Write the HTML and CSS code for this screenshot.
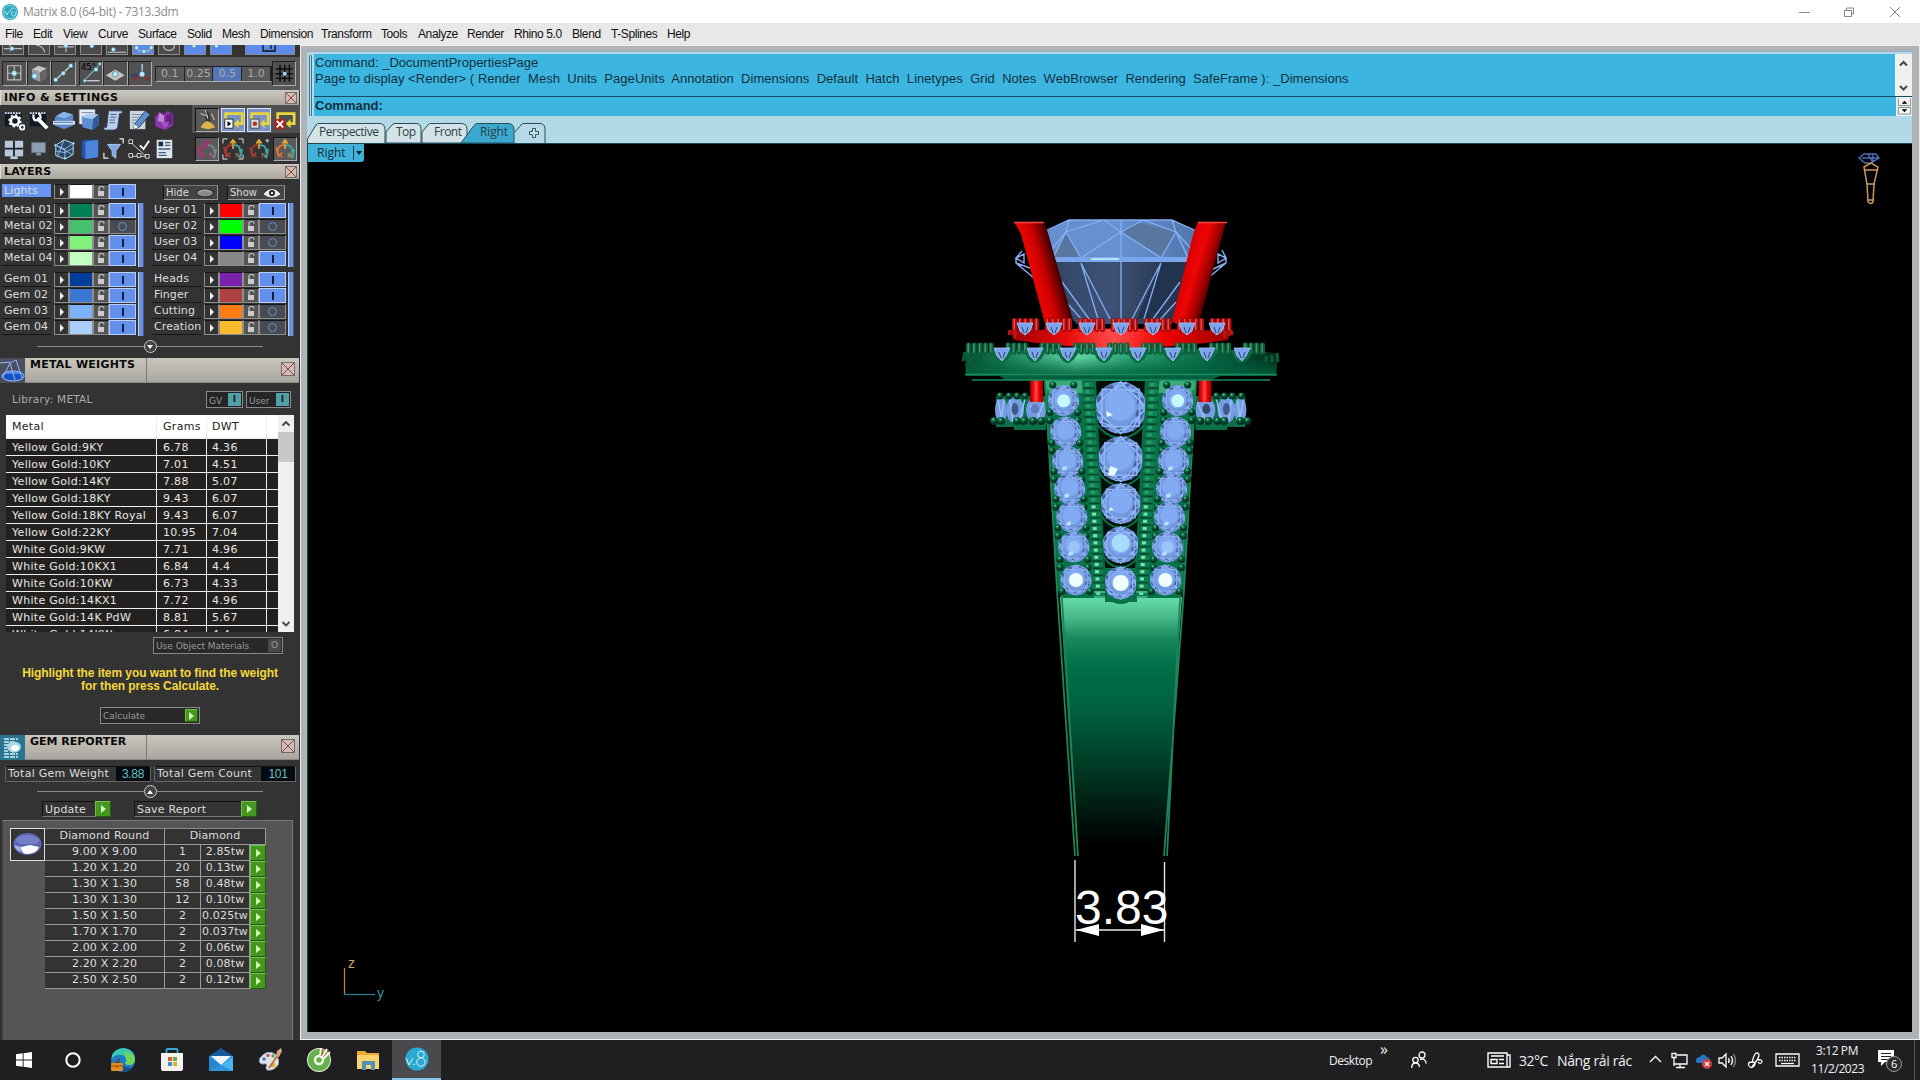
FILE: index.html
```html
<!DOCTYPE html>
<html lang="en">
<head>
  <meta charset="UTF-8">
  <title>Matrix 8.0 (64-bit) - 7313.3dm</title>
  <link rel="stylesheet" href="styles.css">
</head>
<body>
  <header class="titlebar">
    <svg class="app-icon" viewBox="0 0 18 18"><circle cx="9" cy="9" r="8" fill="#2ca5c0"/><circle cx="9" cy="9" r="6.5" fill="none" stroke="#7fd4e4" stroke-width="1"/><path d="M4 8l2 4 2-4M13 6a2 2 0 1 0-1 3 2 2 0 1 0 1 0" fill="none" stroke="#a9e6f0"/></svg>
    <span class="title">Matrix 8.0 (64-bit) - 7313.3dm</span>
    <svg class="win-buttons" viewBox="0 0 104 20" fill="none" stroke="#888"><path d="M1 10.5h11M46.500 8.500h7v6h-7zM48.500 8v-2h7v6h-2M92 5l10 10M102 5l-10 10"/></svg>
  </header>

  <nav class="menubar">
    <span>File</span><span>Edit</span><span>View</span><span>Curve</span><span>Surface</span><span>Solid</span><span>Mesh</span><span>Dimension</span><span>Transform</span><span>Tools</span><span>Analyze</span><span>Render</span><span>Rhino 5.0</span><span>Blend</span><span>T-Splines</span><span>Help</span>
  </nav>

  <div class="workspace">
    <aside class="sidebar">
      <div class="snap-row" id="snaps"></div>
      <div class="tool-row">
        <div class="tool-group" id="toolsA"></div>
        <div class="tool-group" id="toolsB"></div>
        <div class="grid-steps"><span>0.1</span><span>0.25</span><span class="on">0.5</span><span>1.0</span></div>
        <div class="tool"><svg viewBox="0 0 24 24"><path d="M3 7.500h18M3 12.500h18M3 17.500h18M7.500 3v18M12.500 3v18M17.500 3v18" stroke="#080808" stroke-width="1.500"/><circle cx="12.500" cy="12.500" r="2.200" fill="#9cd8ee"/></svg></div>
      </div>

      <div class="section-head info"><b>INFO &amp; SETTINGS</b><i class="close"></i></div>
      <div class="icon-block">
        <div class="icon-grid" id="infoIcons"></div>
        <div class="icon-grid history" id="historyIcons"></div>
      </div>

      <div class="section-head"><b>LAYERS</b><i class="close"></i></div>
      <div class="layers">
        <div class="lights-row">
          <div id="lights"></div>
          <span class="mini hide">Hide <svg viewBox="0 0 18 10"><ellipse cx="9" cy="5" rx="8.500" ry="4" fill="#888" stroke="#222"/><path d="M3 4q6-4 12 0" stroke="#bbb" fill="none"/></svg></span>
          <span class="mini show">Show <svg viewBox="0 0 18 10"><path d="M1 6q8-9 16 0q-8 6-16 0z" fill="#eee" stroke="#eee"/><circle cx="9" cy="5" r="3" fill="#222"/><circle cx="9" cy="5" r="1.200" fill="#eee"/></svg></span>
        </div>
        <div class="layer-grid" id="layerGrid"></div>
        <div class="divider"><i class="down"></i></div>
      </div>

      <div class="panel-head">
        <svg viewBox="0 0 25 25"><rect width="25" height="25" fill="#4b5060"/><ellipse cx="13" cy="18" rx="11" ry="5" fill="#1650c4" stroke="#9fc4ff"/><path d="M3 19L10 5l6-3 6 18M10 5l5 17M0 5l10-1M5 15l15 0" fill="none" stroke="#8db9ff"/></svg>
        <b>METAL WEIGHTS</b><i class="close"></i>
      </div>
      <section class="metal-panel">
        <div class="library">
          <span class="lib-name">Library: METAL</span>
          <span class="switch">GV<i>I</i></span>
          <span class="switch user">User<i>I</i></span>
        </div>
        <div class="metal-table">
          <div class="metal-rows">
            <div class="metal-row head"><span>Metal</span><span>Grams</span><span>DWT</span><span></span></div>
            <div id="metals"></div>
          </div>
          <div class="scrollbar">
            <svg viewBox="0 0 16 17"><path d="M4.500 10.500L8 7l3.500 3.500" fill="none" stroke="#444" stroke-width="1.800"/></svg>
            <i></i>
            <svg class="bottom" viewBox="0 0 16 17"><path d="M4.500 7L8 10.500 11.500 7" fill="none" stroke="#444" stroke-width="1.800"/></svg>
          </div>
        </div>
        <div class="field-button materials">Use Object Materials<i>O</i></div>
        <p class="hint">Highlight the item you want to find the weight<br>for then press Calculate.</p>
        <div class="field-button calc">Calculate<i class="go"></i></div>
      </section>

      <div class="panel-head gem">
        <svg viewBox="0 0 25 25"><rect width="25" height="25" fill="#2a7490"/><path d="M4 4h14M4 7h10M4 10h4M4 13h3M4 16h4M4 19h14M4 22h14" stroke="#d5f0f5" stroke-width="1.300" stroke-dasharray="5 1"/><ellipse cx="14" cy="12" rx="7" ry="5.500" fill="#a9d8e8"/><ellipse cx="15" cy="13" rx="4" ry="3" fill="#fff"/></svg>
        <b>GEM REPORTER</b><i class="close"></i>
      </div>
      <section class="gem-panel">
        <div class="totals">
          <span class="total weight">Total Gem Weight<b>3.88</b></span>
          <span class="total">Total Gem Count<b>101</b></span>
        </div>
        <div class="divider"><i class="up"></i></div>
        <div class="actions"><span class="update">Update</span><i class="go"></i><span class="save">Save Report</span><i class="go"></i></div>
        <div class="gem-list">
          <div class="thumb"><svg viewBox="0 0 33 30"><ellipse cx="16.500" cy="15" rx="14" ry="11" fill="#5c66b4"/><path d="M4 11q12-10 25 0l-4 4H9z" fill="#7380c6"/><path d="M10 18l9-2 9 2q-2 7-13 7-5-1-5-7z" fill="#fff"/><path d="M3 16l7 2 0 5q-6-2-7-7z" fill="#a6b3df"/></svg></div>
          <div class="gem-table">
            <div class="gem-row head"><span>Diamond Round</span><span>Diamond</span></div>
            <div id="gems"></div>
          </div>
        </div>
      </section>
    </aside>

    <main class="main">
      <div class="command">
        <div class="grip"></div>
        <div class="command-body">
          <div class="log">
            <pre>Command: _DocumentPropertiesPage
<span class="options">Page to display &lt;Render&gt; ( Render  Mesh  Units  PageUnits  Annotation  Dimensions  Default  Hatch  Linetypes  Grid  Notes  WebBrowser  Rendering  SafeFrame ): _Dimensions</span></pre>
            <svg viewBox="0 0 17 42"><path d="M5 11.500l3.500-3.500 3.500 3.500M5 32l3.500 3.500 3.500-3.500" fill="none" stroke="#444" stroke-width="2"/></svg>
          </div>
          <div class="prompt">
            <b>Command:</b>
            <svg viewBox="0 0 17 19"><path d="M2.500 1v7.500h13V1M2.500 10.500h13v7h-13z" fill="#f4f4f4" stroke="#888"/><path d="M6 6.500l3-3 3 3zM6 12.500h6l-3 3z"/></svg>
          </div>
        </div>
      </div>

      <svg class="tabs" viewBox="0 0 260 20">
        <g fill="#d3e3e8" stroke="#264f5c">
          <path d="M.5 20v-4L9 2q1-1.500 3-1.500h60q6 0 6 6V20"/>
          <path d="M79 9l6-7q1-1.500 3-1.500h21q5 0 5 6V20H79z"/>
          <path d="M115 9l6-7q1-1.500 3-1.500h30q6 0 6 6V20H115z"/>
          <path d="M154 20L167 2.500q1.500-2 4-2h30q6 0 6 6V20z" fill="#3ba9cf"/>
          <path d="M208 9l6-7q1-1.500 3-1.500h16q5 0 5 6V20" fill="#b7dae6"/>
        </g>
        <path d="M225.500 5.500h3v3h3v3h-3v3h-3v-3h-3v-3h3z" fill="#c9e5ee" stroke="#36525c"/>
        <g class="tab-text">
          <text x="12" y="13" textLength="60">Perspective</text><text x="89" y="13" textLength="20">Top</text><text x="127" y="13" textLength="28">Front</text><text x="173" y="13" textLength="28">Right</text>
        </g>
      </svg>

      <div class="viewport">
        <div class="view-label"><span>Right</span><i></i></div>
        <svg class="scene" id="scene" viewBox="308 144 1604 888">
          <defs>
            <linearGradient id="shank" x1="0" y1="598" x2="0" y2="845" gradientUnits="userSpaceOnUse">
              <stop offset="0" stop-color="#62dca8"/><stop offset=".08" stop-color="#48b98a"/><stop offset=".16" stop-color="#1b895e"/><stop offset=".27" stop-color="#00714a"/><stop offset=".45" stop-color="#006040"/><stop offset=".65" stop-color="#004029"/><stop offset=".85" stop-color="#001b11"/><stop offset="1" stop-color="#000"/>
            </linearGradient>
            <linearGradient id="prongL" x1="1022" y1="282" x2="1060" y2="271" gradientUnits="userSpaceOnUse">
              <stop offset="0" stop-color="#b00"/><stop offset=".35" stop-color="#e80505"/><stop offset=".6" stop-color="#c00"/><stop offset="1" stop-color="#300"/>
            </linearGradient>
            <linearGradient id="prongR" x1="1183" y1="270" x2="1216" y2="280" gradientUnits="userSpaceOnUse">
              <stop offset="0" stop-color="#d60000"/><stop offset=".35" stop-color="#f00505"/><stop offset=".65" stop-color="#a00"/><stop offset="1" stop-color="#200"/>
            </linearGradient>
            <linearGradient id="redBand"><stop offset="0" stop-color="#900"/><stop offset=".25" stop-color="#e80a0a"/><stop offset=".47" stop-color="#ff4a4a"/><stop offset=".7" stop-color="#e00"/><stop offset="1" stop-color="#900"/></linearGradient>
            <linearGradient id="greenBand"><stop offset="0" stop-color="#0a4a30"/><stop offset=".12" stop-color="#137a50"/><stop offset=".36" stop-color="#61d3a4"/><stop offset=".55" stop-color="#249c6c"/><stop offset=".8" stop-color="#076240"/><stop offset="1" stop-color="#032a1b"/></linearGradient>
            <linearGradient id="bandShade" x2="0" y2="1"><stop offset=".3" stop-color="#00603e" stop-opacity="0"/><stop offset=".9" stop-color="#00603e"/></linearGradient>
            <linearGradient id="crown"><stop offset="0" stop-color="#668fd0"/><stop offset=".5" stop-color="#6690d0"/><stop offset="1" stop-color="#496a9c"/></linearGradient>
            <linearGradient id="pavilion"><stop offset="0" stop-color="#2b3e5d"/><stop offset=".45" stop-color="#3d5276"/><stop offset="1" stop-color="#131e30"/></linearGradient>
            <radialGradient id="bead" cx=".4" cy=".3"><stop offset="0" stop-color="#7fe0b4"/><stop offset=".35" stop-color="#11734a"/><stop offset="1" stop-color="#003320"/></radialGradient>
            <symbol id="gem" viewBox="-50 -50 100 100">
              <circle r="48" fill="#7299de"/>
              <g fill="#48639c"><path d="M31-22l12 6-1 14-12-6zM30 4l15 0-6 18-12-6zM14 30l14-5 8 8-14 12zM-6 34l14 3-6 10-13-3zM-32 22l12 8-3 12-13-9zM-46 0l12 6-1 12-9-4zM22-38l13 8-5 8-11-9zM-28-38l12-5 4 7-11 6zM4-46l14 3-7 7zM-44-20l9-3 0 12-9 6z"/></g>
              <path d="M0-48L14-33 34-34 35-14 48 0 35 14 34 34 14 35 0 48-14 35-34 34-35 14-48 0-35-14-34-34-14-33zM14-33L35-14V14L14 35H-14L-35 14V-14L-14-33zM35-14L48 12M35 14L20 42M14 35L-12 46M-14 35L-40 26M-35 14L-47-14M-14-33L12-47M14-33L40-26" fill="none" stroke="#8fb6f8" stroke-width="3"/>
              <circle r="28" cx="-1" cy="-4" fill="#82abf4"/>
            </symbol>
          </defs>
        </svg>
      </div>
    </main>
  </div>

  <footer class="taskbar">
    <div class="pinned">
      <span><svg viewBox="0 0 24 24"><path d="M4 6.300l6.700-1v6.200H4zM11.600 5.200L20 4v7.500h-8.400zM4 12.500h6.700v6.300L4 17.800zM11.600 12.500H20V20l-8.400-1.200z" fill="#fff"/></svg></span>
      <span><svg viewBox="0 0 24 24"><circle cx="12" cy="12" r="6.700" fill="none" stroke="#fff" stroke-width="2"/></svg></span>
      <span><svg viewBox="0 0 24 24"><circle cx="12" cy="12" r="12" fill="#1d7ac4"/><path d="M1 7C7-4 25-1 24 12c-1 6-8 6-10 3 3-4 0-8-5-8-4 0-7 1-8 4z" fill="#3dc9b0"/><path d="M14 4q11 2 10 9-3 6-10 3 3-3 0-8z" fill="#71d65b"/><path d="M9 10q-3 9 12 10-8 8-16 0-3-6 4-10z" fill="#15508f"/><rect y="15" width="12" height="8" rx="1" fill="#e38b20"/><path d="M4 15v-2h4v2M0 18h12M6 17v3" fill="none" stroke="#9e520b"/></svg></span>
      <span><svg viewBox="0 0 24 24"><path d="M6.500 6V2q0-1 1-1h9q1 0 1 1v4" fill="none" stroke="#37a5df" stroke-width="1.800"/><path d="M1 5h22v16q0 2-2 2H3q-2 0-2-2z" fill="#f4f3ee"/><path d="M8 9h4v4H8z" fill="#d75a34"/><path d="M13 9h4v4h-4z" fill="#79a63b"/><path d="M8 14h4v4H8z" fill="#3c91c7"/><path d="M13 14h4v4h-4z" fill="#e4ad37"/></svg></span>
      <span><svg viewBox="0 0 24 24"><path d="M0 8L12 0l12 8v3H0z" fill="#155a9c"/><path d="M0 8h24v15H0z" fill="#2f96dd"/><path d="M2 8h20l-10 9z" fill="#f2f5f7"/><path d="M0 9l12 8L0 23z" fill="#2484cc"/><path d="M24 9L12 17l12 6z" fill="#48b5ef"/></svg></span>
      <span><svg viewBox="0 0 24 24"><path d="M2 10Q9 1 17 6q5 5 3 11-4 6-11 5-2-2 0-5-1-2-4-1-5 0-3-6z" fill="#dfe4ea" stroke="#9ab"/><circle cx="6" cy="11" r="1.800" fill="#3c79c4"/><circle cx="10" cy="7.500" r="1.800" fill="#c95f65"/><circle cx="15" cy="8" r="1.700" fill="#50a864"/><circle cx="15" cy="17" r="2.500" fill="#e6b332"/><path d="M20 7L11 20" stroke="#bf7542" stroke-width="2"/><path d="M18 8l1-5 4-3 1 3-3 6z" fill="#d9a581"/></svg></span>
      <span><svg viewBox="0 0 24 24"><circle cx="12" cy="12" r="12" fill="#e7f4dd"/><circle cx="12" cy="12" r="11" fill="#68af4b"/><circle cx="12" cy="12" r="4" fill="none" stroke="#eff9e8" stroke-width="2.500"/><path d="M13 9L14 0M15 10l5-9M16 11l7-7" stroke="#fff" stroke-width="2"/><path d="M14 8l2-8M16 9l6-7" stroke="#b65e3b"/></svg></span>
      <span><svg viewBox="0 0 24 24"><path d="M1 3h8l2 2h12v16H1z" fill="#e8ab35"/><path d="M1 7h22v14H1z" fill="#fbd36d"/><path d="M6 13h13v9h-4v-5h-5v5H6z" fill="#4f92b5"/></svg></span>
      <span class="active"><svg viewBox="0 0 24 24"><circle cx="12" cy="12" r="11.500" fill="#2aa9d2"/><path d="M1 11l3 7 4-7" fill="none" stroke="#d9f6ff"/><circle cx="16" cy="7.500" r="3.300" fill="none" stroke="#d9f6ff"/><circle cx="16" cy="15" r="4.200" fill="none" stroke="#d9f6ff"/><circle cx="9" cy="17.500" r=".8" fill="#d9f6ff"/></svg></span>
    </div>
    <div class="tray">
      <span class="desk">Desktop</span><span class="more">»</span>
      <svg class="people" viewBox="0 0 16 18" fill="none" stroke="#fff" stroke-width="1.300"><circle cx="11" cy="4" r="3"/><circle cx="4.500" cy="9" r="2.700"/><path d="M.7 17q0-5 4-5 3.500 0 3.800 4M9 8.500q5-2 6.300 4"/></svg>
      <svg class="news" viewBox="0 0 24 16" fill="none" stroke="#fff" stroke-width="1.400"><path d="M1 1h19v14H1zM20 3h3v12h-4M4 4h13M4 7.500h6v4H4zM12 7.500h5M12 11.500h5"/></svg>
      <span class="temp">32°C</span><span class="weather">Nắng rải rác</span>
      <svg class="sys" viewBox="0 0 170 24" fill="none" stroke="#fff" stroke-width="1.300">
        <path d="M9 14l5.500-5.500L20 14"/>
        <path d="M36 7h10v9H33v-5M31 5.500h4v4h-4zM33 9.500V18M39 16v3M35 19.500h9"/>
        <path d="M55 13q0-4 4-4 3-5 7 0 4 1 3 6H57q-2 0-2-2z" fill="#2777c4" stroke="none"/><circle cx="66" cy="16" r="5" fill="#d43c3c" stroke="none"/><path d="M64 14l4 4M68 14l-4 4"/>
        <path d="M78 10h3l4-4v13l-4-4h-3zM87.500 10q1.500 2.500 0 5M90 8q3 4.500 0 9"/><path d="M92.500 6q4 6.500 0 13" stroke="#888"/>
        <path d="M108 18q-2-4 3-4 5 0 2 4-3 3-5 0zM111 15q2-11 6-10 3 2-3 10l-3 4M117 12q4-1 4 2-2 3-4 0"/>
        <path d="M135 6h23v12h-23z"/><path d="M138 9.500h17M138 12.500h17" stroke-dasharray="1.500 1"/><path d="M140 15.500h13"/>
      </svg>
      <span class="clock">3:12 PM<br>11/2/2023</span>
      <svg class="notify" viewBox="0 0 26 26"><path d="M1 3h16v12h-9l-4 4v-4H1z" fill="#fff"/><path d="M4 6.500h10M4 9.500h10M4 12.500h7" stroke="#222"/><circle cx="17" cy="17" r="7.500" fill="#2c2c2e" stroke="#999"/><text x="14" y="21">6</text></svg>
      <i class="show-desktop"></i>
    </div>
  </footer>

  <script>
    const byId = id => document.getElementById(id);
    const svg = (body, size = 24) => `<svg viewBox="0 0 ${size} ${size}">${body}</svg>`;
    const dot = (x, y, r = 2.4) => `<circle cx="${x}" cy="${y}" r="${r}" fill="#b9e8f8" stroke="#1d6480" stroke-width=".6"/>`;
    const line = (d, c = '#bbb', w = 1.3) => `<path d="${d}" fill="none" stroke="${c}" stroke-width="${w}"/>`;

    // osnap row, cut off by the menu bar
    const snaps = [
      line('M1 4h20M8 0v7') + dot(10, 4), line('M8 0q9 2 9 8'), line('M3 2h18M12 0v8') + dot(12, 1),
      dot(12, 1), line('M1 8h20') + dot(7, 5), line('M3 0q0 7 9 7t9-7') + dot(4, 3) + dot(12, 7) + dot(20, 3),
      line('M5 0q0 6 6 6t6-6'), dot(10, 1), dot(6, 1), line('M17 0v6h12V0M25 0v4', '#111')
    ];
    byId('snaps').innerHTML = snaps.map((s, i) =>
      `<span class="${[5, 7, 8, 9].includes(i) ? 'on' : ''}${i == 9 ? ' wide' : ''}"><svg viewBox="0 0 ${i == 9 ? 48 : 22} 10">${s}</svg></span>`).join('');

    const tool = body => `<div class="tool">${svg(body)}</div>`;
    byId('toolsA').innerHTML = [
      line('M5 4h14v15H5zM12 4v15M5 12h14') + dot(12, 12, 3),
      '<path d="M4 8l7-4 9 3-7 4z" fill="#c5c5c5"/><path d="M4 8l9 3v10l-8-3z" fill="#9b9b9b"/><path d="M20 7l-7 4v10l7-4z" fill="#656565"/>' + dot(7, 15, 3),
      line('M3 20L20 4', '#ddd') + dot(4, 19) + dot(12, 12) + dot(20, 4)
    ].map(tool).join('');
    byId('toolsB').innerHTML = [
      line('M5 19L20 4', '#b8e4f8', 1) + line('M5 20h16', '#ddd') + '<text x="1" y="9" font-size="9">45°</text>' + dot(17, 8) + dot(5, 20, 1.8) + dot(21, 2, 1.8),
      '<path d="M2 14l10-6 10 6-10 6z" fill="#c8c8be"/>' + dot(12, 13, 3),
      line('M12 13L2 15', '#33446a', 3) + line('M12 13l-8 7M12 13l10 6', '#803333', 3) + line('M14 2v10', '#b8e4f8') + dot(14, 13, 3)
    ].map(tool).join('');

    const win = '<path d="M2 4h18v15H2z" fill="#101725"/><path d="M2 4.500h18" stroke="#dfe9ff" stroke-width="2" stroke-dasharray="2 1"/>';
    const cube = '<path d="M4 9l7-4 12 1-7 5z" fill="#a8c8f0"/><path d="M4 9l12 2v12L5 20z" fill="#5e8fd4"/><path d="M23 6l-7 5v12l7-5z" fill="#315b9b"/>';
    const infoIcons = [
      win + '<circle cx="13" cy="13" r="4.500" fill="none" stroke="#fff" stroke-width="3"/><circle cx="13" cy="13" r="6.500" fill="none" stroke="#fff" stroke-width="1.500" stroke-dasharray="2.500 2.500"/><circle cx="21" cy="20" r="2.500" fill="none" stroke="#fff" stroke-width="2"/>',
      win + line('M10 10l11 11', '#fff', 4) + line('M6 6q-1 8 5 6 5-2 1-7', '#fff', 2.500),
      '<path d="M2 9l9-6 11 3v12l-10 4-10-4z" fill="#5c88c9"/><path d="M3 8l9-5 9 3-8 4z" fill="#89b2e8"/><path d="M0 13h24v4H0z" fill="#d8e4f1"/><path d="M1 14h21v1H1z" fill="#356ba8"/>',
      '<path d="M1 0h18v17H1z" fill="#e6edf5" stroke="#445"/><path d="M4 4h13M4 8h5" stroke="#779"/>' + cube,
      '<path d="M6 2h15v3h-3l-2 15q-1 3-4 3H1v-3h3z" fill="#becde8" stroke="#29476d"/><path d="M8 6h7M8 9h6M7 12h6M7 15h6" stroke="#3c5b86"/>',
      '<path d="M2 2h17v20H2z" fill="#ccd5dd"/><path d="M4 6h13M4 9h10M4 12h8M4 15h11" stroke="#8090a0"/><path d="M7 17L19 2l5 4-12 14-6 2z" fill="#5d92ce" stroke="#203c60"/><path d="M7 17l4 3-5 2z" fill="#fff"/>',
      '<path d="M2 9l5-6 5 3 4-4 6 4v12l-9 5-10-4z" fill="#8a36ac"/><path d="M7 4l5 3v8l-7-2z" fill="#c083d8"/><path d="M14 7l7-2v11l-7 4z" fill="#642083"/><path d="M8 13l5 2 4-2v5l-5 3z" fill="#a352c2"/>',
      '<path d="M2 3h20v17H2z" fill="#b8c7d9"/><path d="M12 3v17M2 11.500h20" stroke="#18202c" stroke-width="2"/><path d="M8 20h8v3H8z" fill="#b8c7d9"/>',
      '<path d="M4 5h15v11H4z" fill="#8f9eb2" stroke="#617084"/><path d="M9 16h5v3H9z" fill="#8698af"/>',
      '<path d="M3 8l9-6 10 4v12l-9 5-10-4z" fill="#294764" stroke="#cfe5ff"/><path d="M3 8l10 4 9-6M13 12v11M3 8l18 10M12 2L5 20M3 14l10 2 9-5" fill="none" stroke="#9ec5ee"/>' + dot(3, 8, 1.600) + dot(22, 6, 1.600) + dot(13, 22, 1.600),
      '<path d="M4 4l4-2 14 0v19l-14 2-4-2z" fill="#2455a4"/><path d="M8 4l14-2v19l-14 2z" fill="#4b83dd"/>',
      '<path d="M5 7h14l-5 7v8l-4-3v-5z" fill="#7baae3" stroke="#b6d2f4"/>' + line('M1 16v6h5M18 1h4v5', '#eee'),
      line('M2 4l19 17M2 20h18', '#ddd', 1) + line('M13 8l4 4 6-9', '#fff', 2) + '<path d="M1 2h4v4H1zM1 17h4v4H1zM10 17h4v4h-4zM19 18h4v4h-4z" fill="#222" stroke="#eee"/>',
      '<path d="M4 2h17v20H4z" fill="#dde6ef"/><path d="M6 4h5v5H6z" fill="#17304e"/><path d="M13 5h6M13 8h6M6 12h13M6 16h8M6 19h9" stroke="#445c80" stroke-width="1.500"/>'
    ];
    byId('infoIcons').innerHTML = infoIcons.map(i => `<span>${svg(i)}</span>`).join('');

    const loop = (inner, c = '#ead53a') => line('M4 14V5h18v11h-5', c, 3) + '<path d="M18 11v10l-5-5z" fill="' + c + '"/>' + inner;
    const tree = (a, b, c) => line('M12 12V3M9 6l3-4 3 4', a, 1.700) + line('M11 8q-7-1-7 8M2 10l3 10 4-4', b, 2) + line('M13 8q7-1 7 8M22 12l-2 9-5-4', c, 2) + line('M5 17l4 4M19 16l-4 6', b, 1.500);
    const history = [
      ['<path d="M11 2l3 2 2 9-4 2-3-9z" fill="#382d27"/><path d="M5 5l8 3M10 1l3 10M17 5l3 7" stroke="#ddd"/><path d="M5 20q3-6 8-7 5 2 8 7-8 4-16 0z" fill="#ddb14f"/>', 'pressed'],
      [loop('<path d="M3 11h9v10H3z" fill="#fff" stroke="#222"/><path d="M6 13l4 3-4 3z"/>'), 'lit'],
      [loop('<path d="M3 11h9v10H3z" fill="#ddd" stroke="#444"/><circle cx="7.500" cy="16" r="2.500" fill="#a33"/>'), 'lit'],
      [loop('<path d="M1 11h11v11H1z" fill="#b12020"/><path d="M3 13l7 7M10 13l-7 7" stroke="#fff" stroke-width="2"/>'), ''],
      [tree('#a23476', '#b1327a', '#79848b'), 'pressed'],
      [tree('#e8ad39', '#b83934', '#3fa99e') + line('M1 6V1h5M18 1h5v5M23 18v5h-5M6 23H1v-5', '#eee', 1), ''],
      [tree('#e8ad39', '#a33934', '#3fa9a9') + line('M21 1v4M19 3h4', '#ddd', 1), ''],
      [tree('#e8ad39', '#d77430', '#3fa9a9'), 'pressed']
    ];
    byId('historyIcons').innerHTML = history.map(([i, c]) => `<span class="${c}">${svg(i)}</span>`).join('');

    // layer name, swatch colour, visible
    const layerRow = ([name, colour, on], cls = '') => `
      <div class="layer ${cls}"><span class="name">${name}</span><i class="play"></i><i class="swatch" style="background:${colour}"></i>
      <i class="lock"><svg viewBox="0 0 14 12"><path d="M5 6V3.500q0-2 2.500-2t2.500 2" fill="none" stroke="#ccc" stroke-width="1.200"/><path d="M4 6h6v5H4z" fill="#ccc"/></svg></i>
      <i class="toggle ${on ? 'on' : ''}"></i></div>`;
    byId('lights').innerHTML = layerRow(['Lights', '#ffffff', 1], 'selected');
    const groups = [
      [['Metal 01', '#008256', 1], ['Metal 02', '#45c16c', 0], ['Metal 03', '#80f27c', 1], ['Metal 04', '#c2ffc0', 1]],
      [['User 01', '#ff0000', 1], ['User 02', '#00ff00', 0], ['User 03', '#0000ff', 0], ['User 04', '#878787', 1]],
      [['Gem 01', '#003c9b', 1], ['Gem 02', '#3d77d5', 1], ['Gem 03', '#7eb1fb', 1], ['Gem 04', '#aacfff', 1]],
      [['Heads', '#7920ad', 1], ['Finger', '#ae4040', 1], ['Cutting', '#fd7b12', 0], ['Creation', '#f9bb2c', 0]]
    ];
    byId('layerGrid').innerHTML = groups.map(g =>
      `<div class="layer-group"><div>${g.map(l => layerRow(l)).join('')}</div><i class="bar"></i></div>`).join('');

    const metals = [
      ['Yellow Gold:9KY', '6.78', '4.36'], ['Yellow Gold:10KY', '7.01', '4.51'], ['Yellow Gold:14KY', '7.88', '5.07'],
      ['Yellow Gold:18KY', '9.43', '6.07'], ['Yellow Gold:18KY Royal', '9.43', '6.07'], ['Yellow Gold:22KY', '10.95', '7.04'],
      ['White Gold:9KW', '7.71', '4.96'], ['White Gold:10KX1', '6.84', '4.4'], ['White Gold:10KW', '6.73', '4.33'],
      ['White Gold:14KX1', '7.72', '4.96'], ['White Gold:14K PdW', '8.81', '5.67'], ['White Gold:14KW', '6.84', '4.4']
    ];
    byId('metals').innerHTML = metals.map(m =>
      `<div class="metal-row"><span>${m[0]}</span><span>${m[1]}</span><span>${m[2]}</span><span></span></div>`).join('');

    const gems = [
      ['9.00 X 9.00', 1, '2.85tw'], ['1.20 X 1.20', 20, '0.13tw'], ['1.30 X 1.30', 58, '0.48tw'],
      ['1.30 X 1.30', 12, '0.10tw'], ['1.50 X 1.50', 2, '0.025tw'], ['1.70 X 1.70', 2, '0.037tw'],
      ['2.00 X 2.00', 2, '0.06tw'], ['2.20 X 2.20', 2, '0.08tw'], ['2.50 X 2.50', 2, '0.12tw']
    ];
    byId('gems').innerHTML = gems.map(g =>
      `<div class="gem-row"><span>${g[0]}</span><span>${g[1]}</span><span>${g[2]}</span><i class="go"></i></div>`).join('');

    // ---- ring, right view ----
    const CX = 1120.7;
    const mirror = x => 2 * CX - x;
    const out = [];
    const path = (d, fill, stroke = 'none', w = 1) => out.push(`<path d="${d}" fill="${fill}" stroke="${stroke}" stroke-width="${w}"/>`);
    const bead = (x, y, r = 3.6) => out.push(`<circle cx="${x}" cy="${y}" r="${r}" fill="url(#bead)"/>`);
    const gem = (x, y, rx, ry = rx) => out.push(`<use href="#gem" x="${x - rx}" y="${y - ry}" width="${2 * rx}" height="${2 * ry}"/>`);
    const spot = (x, y, r, c) => out.push(`<circle cx="${x}" cy="${y}" r="${r}" fill="${c}"/>`);

    // centre stone
    path('M1016 258l20-22 33-16h103l34 14 20 24-10 5H1026z', 'url(#crown)');
    path('M1066 232l15 26h-27zM1136 222l40 10-15 24-40-24z', '#57779f');
    path('M1016 260h210l-54 64h-95z', 'url(#pavilion)');
    path('M1161 263l22 0-24 56h-22z', '#22334f');
    path('M1000 225h47l-18 105h-30zM1197 225h35v105h-45z', '#000');
    path('M1047 230l22-10h103l22 10M1069 220l-3 12-12 24M1066 232l38-12 17 12 22-12 33 12 12 26M1066 232l15 26 40-26 40 26 15-26-4-12M1054 256l12-24-18 22M1121 220v104M1188 257l-12-25 18 20M1081 263l17 56M1081 263l29 56M1161 263l-17 56M1161 263l-29 56M1062 282l30 41M1066 302l18 20M1180 282l-30 41M1176 302l-18 20', 'none', '#86aff4', 1.3);
    path('M1054 257h134v5h-134z', '#7ba6ed');
    path('M1091 259h28', 'none', '#c9f1fb', 1.6);
    path('M1022 251l-6 7 0 5 18 15M1016 258l8-4v9zM1222 250l4 8 0 5-18 15M1226 258l-8-4v9zM1016 263l14 5M1226 263l-15 7', 'none', '#86aff4', 1.4);

    // side stones under the halo
    for (const s of [x => x, mirror]) {
      const dir = s === mirror ? -1 : 1;
      path(`M${s(996)} 396H${s(1046)}V430H${s(1014)}V427H${s(996)}z`, '#0b7048');
      for (const [x, rx] of [[1001, 6], [1015, 9], [1036, 10]]) out.push(`<ellipse cx="${s(x)}" cy="410" rx="${rx}" ry="13" fill="#759de2"/>`);
      path(`M${s(998)} 400l${dir * 4} 21M${s(1004)} 400l${dir * -3} 22M${s(1010)} 399l${dir * 3} 23M${s(1025)} 399l${dir * -6} 24M${s(1030)} 405l${dir * 12} 15M${s(1044)} 402l${dir * -8} 20`, 'none', '#9cbefa', 1.5);
      out.push(`<ellipse cx="${s(1015)}" cy="409" rx="3.500" ry="6" fill="#405a8c"/><ellipse cx="${s(1035)}" cy="409" rx="4" ry="5" fill="${dir > 0 ? '#5c7dbb' : '#34496f'}"/>`);
      for (const x of [1000, 1009, 1017, 1025]) bead(s(x), 396);
      for (const x of [994, 1001, 1017, 1024, 1033, 1041]) bead(s(x), 421, 4);
      path(`M${s(1030)} 380h${dir * 13}v22h${dir * -13}z`, 'url(#redBand)');
    }

    // shank
    path('M1060 597H1182L1165 845H1076z', 'url(#shank)');
    path('M1044 380H1197L1184 590 1180 598H1062L1057 590z', '#087249');
    path('M1096 381H1145L1134 590H1106z', '#00110a');
    path('M1046 380h40v13h-40zM1156 380h39v13h-39z', '#3aac7b');
    path('M1045 380L1057 590 1075 856M1048 390L1062 600 1078 856M1196 380L1184 590 1164 856M1193 390L1180 600 1167 856', 'none', '#1d8558', 1.8);

    // middle row of graduated stones
    path('M1105 568h32v34h-32z', '#087249');
    for (const [y, r] of [[407.700, 27], [459, 23.500], [503.500, 21], [545, 19], [583, 17]]) {
      out.push(`<circle cx="${CX}" cy="${y + 3}" r="${r}" fill="none" stroke="#0b7048" stroke-width="2"/>`);
      gem(CX, y, r);
    }
    path('M1106 411l7 4-6 2zM1110 466l8 3-4 7-6-1zM1110 507l4 3-5 1z', '#e8fbff');
    spot(CX, 543, 9, '#a9dcfa');
    spot(CX, 583, 8, '#f2ffff');

    for (const s of [x => x, mirror]) {
      const dir = s === mirror ? -1 : 1;
      // ribbed rails
      path(`M${s(1082)} 380h${dir * 13}L${s(1106)} 598H${s(1095)}z`, '#07663f');
      for (let y = 382; y < 598; y += 7.200) {
        const x = s(1088 + (y - 380) * .053);
        out.push(`<rect x="${x - 5.500}" y="${y}" width="11" height="5.500" rx="2" fill="#0f7e51"/><path d="M${x - 5} ${y + 6.200}h10" stroke="#024329" stroke-width="1.300"/><rect x="${x - 3}" y="${y + 1}" width="4" height="3" fill="${y > 500 ? '#7fe0b4' : '#2b9d6b'}"/>`);
      }
      // outer pave rows
      [400.700, 432, 461.700, 489, 517, 547, 580].forEach((y, i, rows) => {
        const x = s(1063.700 + i * 2.050);
        gem(x, y, 16);
        if (i === 0) spot(x, y, 6.500, '#c4f8fb');
        if (i === 5) spot(x, y, 6, '#9cc4fb');
        if (i === 6) spot(x, y, 7, '#effffd');
        if (i > 1 && i < 6) path(`M${x - 6} ${y + 6}l5-2 0 4-4 1z`, '#b9e0ff');
        const next = rows[i + 1] || 611;
        const my = (y + next) / 2 - 2;
        for (const dx of [-14, 14]) {
          if (i < 6) bead(x + dx, my + 6);
          bead(x + dx, i < 6 ? my - 2 : my - 2);
        }
        if (i === 0) { bead(x - 11, 385); bead(x + 10, 385); }
      });
      path(`M${s(1105)} 592h${dir * -11}M${s(1105)} 597h${dir * -11}`, 'none', '#4fc493', 1.5);
    }

    // prongs
    path('M1014 222h29q4 5 8 22l22 76q-8 8-28 4l-24-90z', 'url(#prongL)');
    path('M1226 222h-28q-3 5-8 25l-18 74q6 7 27 2l19-72z', 'url(#prongR)');
    path('M1014 222.500h30M1198 222.500h29', 'none', '#f44', 1.5);

    // red halo
    path('M1010 331Q1120 326 1231 331L1228 340Q1120 356 1014 340z', 'url(#redBand)');
    for (let x = 1012; x < 1230; x += 5.500) {
      if ((x - 1012) % 33 > 22) continue;
      const edge = x < 1024 || x > 1216;
      out.push(`<rect x="${x}" y="318" width="5" height="${edge ? 18 : 14}" rx="2" fill="#a80d0d"/><rect x="${x + 1.500}" y="319" width="1.500" height="11" fill="#f44"/>`);
    }
    for (const x of [1025, 1054, 1087, 1121, 1153, 1187, 1217]) {
      path(`M${x - 8} 323h16l-3 8-5 4-5-4z`, '#7ba4ec', '#a9c8ff', .8);
      path(`M${x - 3} 327l2 6M${x + 3} 327l-2 6`, 'none', '#30466d', 1);
    }
    path('M1010 330l-1 5M1015 331v7M1225 331v7M1231 330l1 5', 'none', '#c01515', 3);

    // green halo
    path('M965 353Q1120 342 1278 353L1276 376H1220L1210 380H1006L1000 376H966z', 'url(#greenBand)');
    path('M965 353Q1120 342 1278 353L1276 376H1220L1210 380H1006L1000 376H966z', 'url(#bandShade)');
    path('M965 374.500H1277M972 380H1270', 'none', '#1a8c5e', 1.3);
    for (let x = 966; x < 1274; x += 5.650) {
      if ((x - 966) % 34 > 23) continue;
      const edge = x < 980 || x > 1262;
      out.push(`<rect x="${x}" y="342.500" width="5.200" height="${edge ? 18 : 12}" rx="2" fill="#0a5c3a"/><rect x="${x + 1.500}" y="343.500" width="1.500" height="9" fill="#3c9a6e"/>`);
    }
    path('M965 352l-2 9M971 358l-2 6M1266 356v6M1272 355v7M1277 353l1 9', 'none', '#0d5c3c', 3);
    for (const x of [1002, 1035, 1068, 1104, 1138, 1173, 1207, 1242]) {
      path(`M${x - 11} 350q2 7 6 11 5 4 9 0 5-4 7-11z`, '#0b6b45');
      path(`M${x - 8} 348h16l-4 8-4 5-5-5z`, '#7ba4ec', '#a9c8ff', .8);
      path(`M${x - 3} 352l2 6M${x + 3} 352l-2 6`, 'none', '#30466d', 1);
    }

    // dimension
    path('M1075 860v82M1164.500 862v80M1076 930h88', 'none', '#e8e8e8', 1.4);
    path('M1076 930l23-6v12zM1164 930l-23-6v12z', '#fff');
    out.push('<text class="dim" x="1075" y="924">3.83</text>');

    // world axis
    path('M344.500 968v26', 'none', '#b98436', 1.3);
    path('M344 994.500h31', 'none', '#28798c', 1.3);
    out.push('<text class="axis" x="348" y="968" fill="#c8a46a">z</text><text class="axis" x="377" y="998" fill="#3b93ab">y</text>');

    // view direction icon
    path('M1859 158l5-4h12l3 4-8 5h-6zM1862 158h16M1868 154l5 9M1873 154v7', 'none', '#4d6fb5', 1.4);
    path('M1864 167l7-4 7 4-4 17-1 18q-2 3-5 0l-1-18zM1865 170h12M1867 184h8M1868 200h6', 'none', '#cf9659', 1.5);
    byId('scene').insertAdjacentHTML('beforeend', out.join(''));
  </script>
</body>
</html>
```
FILE: styles.css
```css
* {
  box-sizing: border-box;
}
body {
  margin: 0;
  width: 1920px;
  height: 1080px;
  overflow: hidden;
  font-family: "DejaVu Sans", sans-serif;
  font-size: 11px;
  background: #333;
  display: flex;
  flex-direction: column;
}
i {
  font-style: normal;
}
svg {
  display: block;
}

/* window chrome */
.titlebar {
  height: 23px;
  background: #fff;
  display: flex;
  align-items: center;
  padding-left: 1px;
  font-family: "Open Sans", sans-serif;
  font-size: 12px;
  letter-spacing: -0.3px;
  color: #8b8b8b;
}
.app-icon {
  width: 18px;
  height: 18px;
}
.title {
  margin-left: 4px;
  flex: 1;
}
.win-buttons {
  width: 104px;
  height: 20px;
  margin-right: 18px;
}
.menubar {
  height: 22px;
  background: #e8e8e8;
  display: grid;
  grid-template-columns: 28px 30px 35px 40px 49px 35px 38px 61px 60px 37px 49px 47px 58px 39px 56px 40px;
  padding-left: 5px;
  line-height: 22px;
  font-family: "Liberation Sans", sans-serif;
  font-size: 12px;
  letter-spacing: -0.4px;
  white-space: nowrap;
  color: #111;
}
.workspace {
  height: 995px;
  display: flex;
}

/* sidebar */
.sidebar {
  width: 300px;
  background: #333;
  color: #ddd;
  overflow: hidden;
}
.snap-row {
  height: 12px;
  display: flex;
  gap: 4px;
  padding-left: 2px;
}
.snap-row span {
  width: 22px;
  height: 10px;
  background: #4b4b4b;
  border: 1px solid #8b8b8b;
  border-top: 0;
}
.snap-row span.on {
  background: #5e8bea;
}
.snap-row .wide {
  width: 50px;
  margin-left: 9px;
}
.tool-row {
  height: 33px;
  background: #595959;
  display: flex;
  align-items: center;
  padding-left: 2px;
}
.tool-group {
  display: flex;
  margin-right: 3px;
}
.tool {
  width: 24.500px;
  height: 25px;
  background: #515151;
  border: 1px solid #222;
  border-right-color: #aaa;
  border-bottom-color: #aaa;
}
.grid-steps {
  display: flex;
  height: 16px;
  border: 1px solid #1f1f1f;
  border-bottom-color: #aaa;
  color: #aaa;
}
.grid-steps span {
  width: 28.700px;
  text-align: center;
  line-height: 14px;
  border-right: 1px solid #222;
}
.grid-steps .on {
  background: #5476b9;
}
.section-head {
  height: 15px;
  margin-right: 1px;
  background: linear-gradient(#cbc8c0, #aaa79f);
  border-left: 1px solid #ddd;
  display: flex;
  justify-content: space-between;
  align-items: center;
  padding: 0 2px 0 3px;
  color: #080808;
  letter-spacing: 0.15px;
}
.section-head.info {
  letter-spacing: 0.4px;
}
.close {
  width: 12px;
  height: 12px;
  border: 1px solid #7d6a66;
  background: linear-gradient(45deg, transparent 46%, #a33 46% 54%, transparent 54%), linear-gradient(-45deg, #c8c0b9 46%, #a33 46% 54%, #c8c0b9 54%);
}
.icon-block {
  height: 59px;
  display: flex;
  justify-content: space-between;
  overflow: hidden;
}
.icon-grid {
  display: grid;
  grid-template-columns: repeat(7, 25px);
  grid-template-rows: 29px 30px;
  align-items: center;
  padding-left: 3px;
}
.icon-grid svg {
  width: 22px;
  height: 22px;
}
.history {
  width: 108px;
  padding-left: 3px;
  grid-template-columns: repeat(4, 26px);
  background: linear-gradient(#505050 28px, #333 28px);
}
.history span {
  width: 24px;
  height: 24px;
  border: 1px solid transparent;
}
.history .pressed {
  border-color: #111 #aaa #aaa #111;
  background: #595959;
}
.history .lit {
  background: #7892c7;
  border-color: #d8e2f4;
}

/* layers */
.layers {
  height: 179px;
  padding: 5px 0 0 2px;
}
.lights-row {
  display: flex;
  height: 19px;
}
.mini {
  width: 55px;
  height: 15px;
  margin: 1px 0 0 27px;
  border: 1px solid #999;
  border-left-color: #111;
  border-top-color: #777;
  background: #444;
  padding-left: 2px;
  display: flex;
  align-items: center;
  justify-content: space-between;
  font-size: 10px;
}
.mini.show {
  width: 58px;
  margin-left: 9px;
}
.mini svg {
  width: 18px;
  height: 10px;
  margin-right: 3px;
}
.layer {
  display: flex;
  height: 16px;
}
.layer .name {
  width: 49px;
  height: 15px;
  margin-right: 3px;
  padding-left: 2px;
  line-height: 14px;
  letter-spacing: 0.1px;
  border-bottom: 1px solid #161616;
  white-space: nowrap;
}
.layer.selected .name {
  background: #6795ef;
  height: 13px;
  line-height: 13px;
  border: 0;
}
.layer i {
  height: 15px;
  border: 1px solid #8e8e8e;
  border-top-color: #161616;
}
.play {
  width: 15px;
  display: flex;
  align-items: center;
  justify-content: center;
}
.play::before {
  content: "";
  border: 4px solid transparent;
  border-left: 4px solid #eee;
  border-right: 0;
}
.swatch {
  width: 24px;
}
.lock {
  width: 16px;
  background: #555;
}
.toggle {
  width: 27px;
  background: #484c52;
  display: flex;
  justify-content: center;
  align-items: center;
}
.toggle::before {
  content: "";
  width: 7px;
  height: 7px;
  border: 1px solid #6892cb;
  border-radius: 50%;
}
.layer .toggle.on {
  background: #6290ec;
  border-color: #b9cff8;
}
.toggle.on::before {
  width: 2px;
  height: 8px;
  border: 0;
  border-radius: 0;
  background: #0e1e3d;
}
.layer-grid {
  display: grid;
  grid-template-columns: 150px 148px;
  row-gap: 5px;
}
.layer-group {
  display: flex;
}
.layer-group .bar {
  width: 6px;
  height: 64px;
  margin-left: 2px;
  background: #6d92dc;
  border-left: 1px solid #bdd0f4;
  border-right: 1px solid #3d5892;
}
.divider {
  height: 1px;
  margin: 10px 37px 0 35px;
  background: #888;
  display: flex;
  justify-content: center;
  align-items: center;
}
.divider i {
  flex: none;
  width: 13px;
  height: 13px;
  border: 1px solid #ccc;
  border-radius: 50%;
  background: #444;
  display: flex;
  justify-content: center;
  align-items: center;
}
.divider i::before {
  content: "";
  border: 3px solid transparent;
}
.divider .down::before {
  border-top: 4px solid #fff;
  border-bottom: 0;
}
.divider .up::before {
  border-bottom: 4px solid #fff;
  border-top: 0;
}

/* panel headers */
.panel-head {
  height: 25px;
  margin-right: 1px;
  background: linear-gradient(#c9c6be, #aaa7a0);
  border-bottom: 1px solid #888;
  display: flex;
  color: #080808;
}
.panel-head > svg {
  width: 25px;
  height: 25px;
}
.panel-head b {
  width: 122px;
  padding-left: 5px;
  border-right: 1px solid #777;
  line-height: 13px;
  letter-spacing: 0.25px;
}
.panel-head.gem b {
  letter-spacing: 0;
}
.panel-head .close {
  width: 14px;
  height: 14px;
  margin: 4px 4px 0 auto;
}

/* metal weights */
.metal-panel {
  height: 352px;
  font-size: 11px;
}
.library {
  height: 32px;
  display: flex;
  align-items: center;
  padding-left: 12px;
}
.lib-name {
  width: 194px;
  font-size: 10.500px;
  letter-spacing: 0.25px;
  color: #aaa;
}
.switch {
  width: 37px;
  height: 17px;
  border: 1px solid #8a8a8a;
  padding: 1px 1px 1px 2px;
  display: flex;
  justify-content: space-between;
  line-height: 16px;
  font-size: 9px;
  color: #999;
  background: #252525;
}
.switch.user {
  width: 45px;
  margin-left: 3px;
}
.switch i {
  width: 13px;
  background: #4fa0a6;
  color: #102020;
  text-align: center;
  font-weight: bold;
  line-height: 13px;
}
.metal-table {
  width: 288px;
  height: 217px;
  margin-left: 6px;
  display: flex;
  overflow: hidden;
}
.metal-rows {
  width: 272px;
}
.metal-row {
  display: grid;
  grid-template-columns: 151px 50px 60px 11px;
  height: 17px;
  background: #22211f;
  border-bottom: 1px solid #eee;
  color: #e6e6e6;
  line-height: 18px;
  letter-spacing: 0.3px;
  white-space: nowrap;
}
.metal-row span {
  padding-left: 6px;
  border-right: 1px solid #eee;
}
.metal-row span:nth-child(3) {
  padding-left: 5px;
}
.metal-row span:last-child {
  border: 0;
}
.metal-row.head {
  height: 24px;
  background: #fff;
  color: #222;
  line-height: 24px;
}
.scrollbar {
  width: 16px;
  background: #f0f0f0;
  display: flex;
  flex-direction: column;
}
.scrollbar i {
  height: 30px;
  background: #c8c8c8;
}
.scrollbar .bottom {
  margin-top: auto;
}
.field-button {
  width: 130px;
  height: 17px;
  border: 1px solid #888;
  background: #292929;
  color: #999;
  font-size: 9px;
  line-height: 15px;
  padding: 1px 1px 1px 2px;
  display: flex;
  justify-content: space-between;
  white-space: nowrap;
}
.field-button i {
  width: 13px;
  height: 13px;
  background: #4a4a4a;
  text-align: center;
  line-height: 13px;
}
.materials {
  margin: 5px 0 0 153px;
}
.hint {
  margin: 13px 0 14px;
  text-align: center;
  font-family: "Liberation Sans", sans-serif;
  font-weight: bold;
  font-size: 12px;
  letter-spacing: -0.08px;
  line-height: 13px;
  color: #f3d93c;
}
.calc {
  width: 100px;
  margin: 0 0 0 100px;
}
i.go {
  width: 16px;
  height: 16px;
  background: #45951f;
  border: 1px solid #74bd51;
  border-right-color: #245c10;
  border-bottom-color: #245c10;
  display: flex;
  align-items: center;
  justify-content: center;
}
.go::before {
  content: "";
  border: 4px solid transparent;
  border-left: 5px solid #cdfcb0;
  border-right: 0;
}
.calc i.go {
  width: 13px;
  height: 13px;
}

/* gem reporter */
.gem-panel {
  height: 281px;
}
.totals {
  display: flex;
  gap: 3px;
  padding: 6px 0 0 5px;
}
.total {
  width: 142px;
  height: 16px;
  padding-left: 2px;
  border: 1px solid #666;
  border-top-color: #111;
  display: flex;
  justify-content: space-between;
  line-height: 14px;
  letter-spacing: 0.25px;
  white-space: nowrap;
}
.total.weight {
  width: 146px;
}
.total b {
  width: 34px;
  background: #030b0e;
  color: #69bfce;
  font-family: "Liberation Sans", sans-serif;
  font-weight: normal;
  font-size: 12px;
  letter-spacing: -0.3px;
  text-align: center;
}
.gem-panel .divider {
  margin: 9px 37px 0;
}
.actions {
  display: flex;
  height: 28px;
  padding: 9px 0 0 42px;
}
.actions span {
  height: 16px;
  border: 1px solid #111;
  border-right: 0;
  border-bottom-color: #777;
  line-height: 15px;
  letter-spacing: 0.2px;
  padding-left: 2px;
}
.actions .update {
  width: 53px;
}
.actions .save {
  width: 107px;
  margin-left: 23px;
}
.gem-list {
  width: 291px;
  height: 223px;
  margin-left: 2px;
  padding: 7px 0 0 7px;
  background: #555;
  border: 1px solid #777;
  border-left-color: #444;
  display: flex;
}
.thumb {
  width: 35px;
  height: 33px;
  border: 1px solid #ddd;
  background: #333;
}
.gem-table {
  width: 221px;
  border-top: 1px solid #888;
}
.gem-row {
  display: grid;
  grid-template-columns: 120px 36px 49px 16px;
  height: 16px;
  background: #333;
  text-align: center;
  line-height: 14px;
  letter-spacing: 0.15px;
}
.gem-row span {
  border-right: 1px solid #999;
  border-bottom: 1px solid #999;
  white-space: nowrap;
}
.gem-row.head {
  grid-template-columns: 120px 101px;
}

/* command area and tabs */
.main {
  flex: 1;
  background: #b3d9e6;
  border: solid #b0b3b5;
  border-width: 6px 8px 8px 7px;
  box-shadow: inset 0 1px 0 #9ac;
  outline: 1px solid #eee;
  outline-offset: -1px;
  display: flex;
  flex-direction: column;
}
.command {
  height: 65px;
  padding-top: 3px;
  display: flex;
}
.grip {
  width: 3px;
  margin: 1px 0 0 2px;
  border: solid #43788a;
  border-width: 0 1px;
}
.command-body {
  flex: 1;
  margin-left: 2px;
  background: #3cb6e1;
  color: #10313d;
  font-family: "Liberation Sans", sans-serif;
  font-size: 13px;
}
.log {
  height: 43px;
  display: flex;
  justify-content: space-between;
  border-bottom: 1px solid #164d60;
}
.log pre {
  margin: 1px 0 0 1px;
  font: inherit;
  line-height: 16px;
}
.options {
  letter-spacing: 0.037px;
}
.log svg {
  width: 17px;
  height: 42px;
  background: #f0f0f0;
}
.prompt {
  height: 19px;
  display: flex;
  justify-content: space-between;
  line-height: 17px;
  padding-left: 1px;
}
.prompt svg {
  width: 16px;
  height: 19px;
  background: #e8f4f8;
}
.tabs {
  width: 260px;
  height: 20px;
  margin-top: 7px;
}
.tab-text {
  font-family: "Open Sans", sans-serif;
  font-size: 12px;
  fill: #2b4047;
}
.viewport {
  position: relative;
  flex: 1;
  background: #000;
  border-top: 1px solid #1b4654;
  border-left: 1px solid #1b4654;
}
.scene {
  width: 1604px;
  height: 888px;
}
.dim {
  font-family: "Liberation Sans", sans-serif;
  font-size: 48px;
  fill: #fff;
}
.axis {
  font-family: "Liberation Sans", sans-serif;
  font-size: 14px;
}
.view-label {
  position: absolute;
  top: 0;
  left: 0;
  width: 56px;
  height: 18px;
  background: #40b2db;
  border-radius: 0 0 3px 0;
  padding-left: 9px;
  display: flex;
  justify-content: space-between;
  line-height: 18px;
  font-family: "Open Sans", sans-serif;
  font-size: 12px;
  color: #12303b;
}
.view-label i {
  width: 11px;
  margin: 2px 0;
  border-left: 1px solid #164050;
  display: flex;
  justify-content: center;
  align-items: center;
}
.view-label i::before {
  content: "";
  border: 3px solid transparent;
  border-top: 4px solid #062029;
  border-bottom: 0;
}

/* taskbar */
.taskbar {
  height: 40px;
  background: #1f1f22;
  color: #f0f0f0;
  display: flex;
  justify-content: space-between;
  font-family: "Open Sans", sans-serif;
  font-size: 12px;
}
.pinned {
  display: flex;
}
.pinned span {
  width: 49px;
  display: flex;
  justify-content: center;
  align-items: center;
}
.pinned svg {
  width: 24px;
  height: 24px;
}
.pinned span:nth-child(-n+2) svg {
  margin-right: 2px;
}
.pinned .active {
  background: #4a4a4e;
  border-bottom: 2px solid #85c6e8;
}
.tray {
  display: flex;
  align-items: center;
  white-space: nowrap;
}
.desk {
  width: 51px;
  letter-spacing: -0.45px;
}
.more {
  width: 31px;
  font-size: 16px;
  margin-top: -22px;
}
.people {
  width: 16px;
  height: 18px;
}
.news {
  width: 24px;
  height: 16px;
  margin-left: 60px;
}
.temp {
  width: 38px;
  margin-left: 8px;
  font-size: 14px;
  letter-spacing: -0.5px;
}
.weather {
  width: 84px;
  font-size: 14px;
  letter-spacing: -0.35px;
}
.sys {
  width: 170px;
  height: 24px;
}
.clock {
  width: 52px;
  text-align: center;
  line-height: 18px;
  letter-spacing: -0.4px;
}
.notify {
  width: 26px;
  height: 26px;
  margin-left: 14px;
}
.notify text {
  fill: #fff;
  font-size: 11px;
}
.show-desktop {
  width: 6px;
  height: 40px;
  margin-left: 11px;
  border-left: 1px solid #555;
}
```
